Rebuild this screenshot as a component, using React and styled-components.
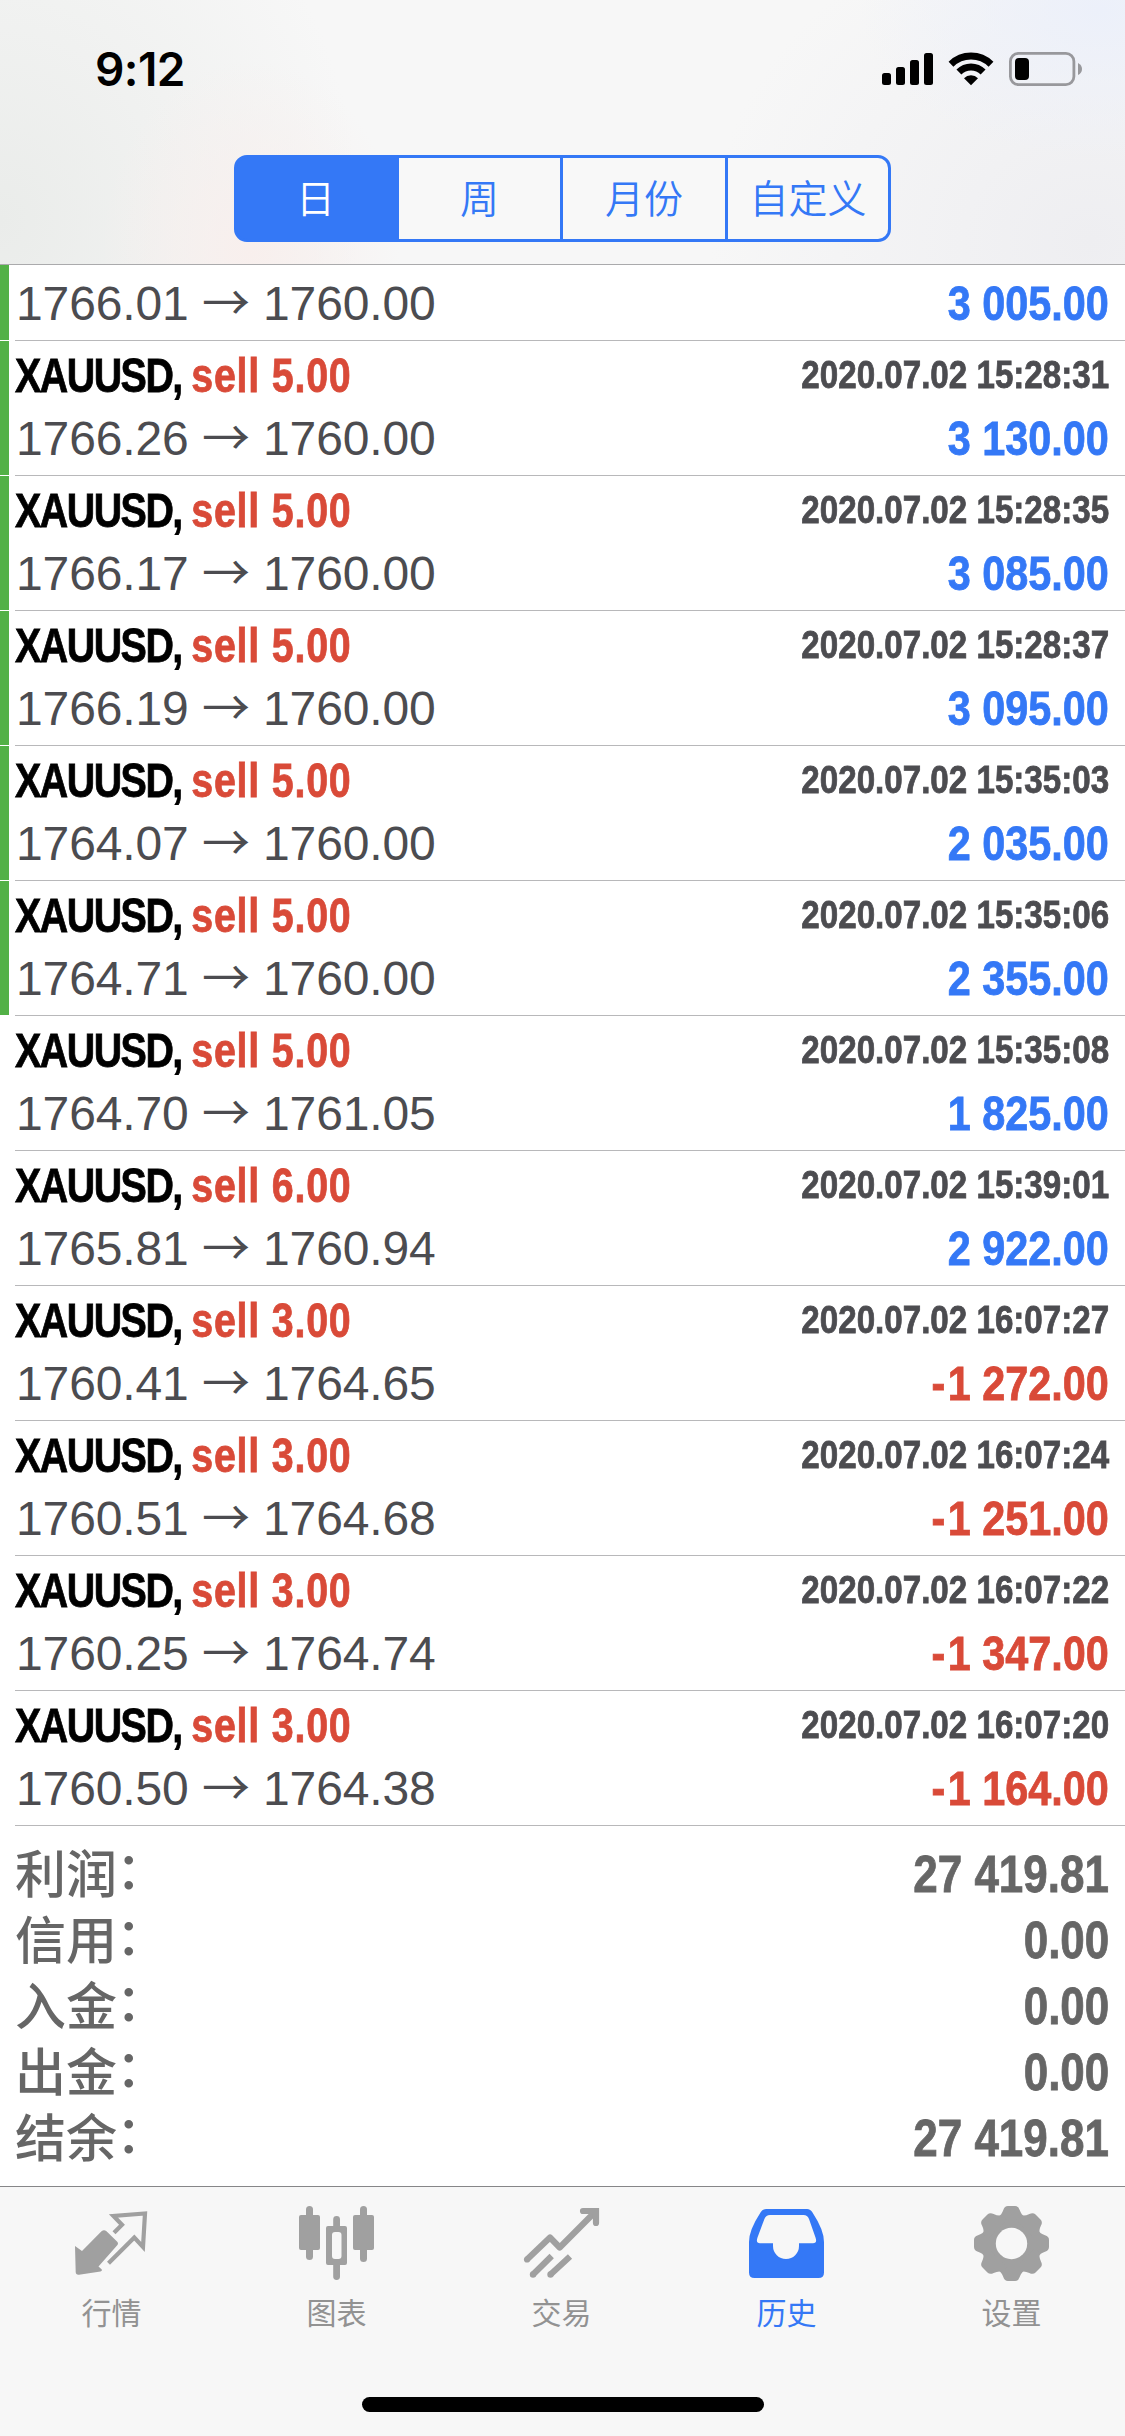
import React from "react";
import styled, { createGlobalStyle } from "styled-components";

const CJK = `"Noto Sans CJK SC", sans-serif`;
const SANS = `"Liberation Sans", ${CJK}`;
const BLUE = "#3478f6";
const RED = "#d94a38";

const GlobalStyle = createGlobalStyle`
  * { box-sizing: border-box; }
  body { margin: 0; background: #fff; }
`;

const Screen = styled.div`
  width: 1125px;
  height: 2436px;
  display: flex;
  flex-direction: column;
  background: #fff;
  overflow: hidden;
  font-family: ${SANS};
`;

const Header = styled.header`
  flex: none;
  height: 265px;
  border-bottom: 1px solid #aaaaac;
  background:
    radial-gradient(ellipse 240px 150px at 1100px 10px, #ecf0fa 0%, #ecf0fa00 100%),
    radial-gradient(ellipse 150px 190px at 250px 250px, #f8efed 0%, #f8efed00 100%),
    radial-gradient(ellipse 360px 420px at 0px 220px, #eaecea 0%, #eaecea00 100%),
    radial-gradient(ellipse 380px 330px at 1090px 240px, #eeeef1 0%, #eeeef100 100%),
    #f7f7f7;
`;

const StatusBar = styled.div`
  height: 155px;
  padding: 0 43px 17px 95px;
  display: flex;
  align-items: center;
  justify-content: space-between;
`;

const Time = styled.span`
  font: 600 46px/60px Inter, sans-serif;
  letter-spacing: -0.6px;
  color: #000;
`;

const StatusIcons = styled.svg`
  display: block;
`;

const Segments = styled.div`
  width: 657px;
  height: 87px;
  margin-left: 234px;
  display: grid;
  grid-template-columns: 162px 164px 165px 1fr;
  border: 3px solid ${BLUE};
  border-radius: 13px;
  overflow: hidden;
  background: ${BLUE};
`;

const Segment = styled.button`
  border: 0;
  border-right: ${(p) => (p.$last ? "0" : `3px solid ${BLUE}`)};
  padding: ${(p) => (p.$active ? "0 2px 6px 0" : "0 0 6px")};
  background: ${(p) => (p.$active ? BLUE : "#f8f8f8")};
  color: ${(p) => (p.$active ? "#fff" : BLUE)};
  font: 350 39px/60px ${CJK};
`;

const List = styled.main`
  flex: none;
  display: flex;
  flex-direction: column;
`;

const Deal = styled.article`
  height: ${(p) => (p.$cut ? 76 : 135)}px;
  display: flex;
`;

const Marker = styled.div`
  width: 9px;
  margin: 0 6px 1px 0;
  background: ${(p) => (p.$on ? "#53b147" : "transparent")};
`;

const DealBody = styled.div`
  flex: 1;
  display: flex;
  flex-direction: column;
  justify-content: flex-end;
  padding: 0 16px 5px 0;
  border-bottom: 1px solid #b8b8ba;
`;

const Line = styled.div`
  height: 63px;
  display: flex;
  justify-content: space-between;
  line-height: 63px;
  white-space: pre;
`;

const Condensed = styled.span`
  display: inline-block;
  font-weight: 700;
  -webkit-text-stroke: 0.8px currentColor;
  transform: scaleX(${(p) => p.$scale});
  transform-origin: ${(p) => p.$origin || "right"} center;
`;

const Symbol = styled(Condensed)`
  font-size: 48px;
  letter-spacing: -1.8px;
  color: #000;
`;

const Side = styled.span`
  letter-spacing: 0.95px;
  color: ${RED};
`;

const Stamp = styled(Condensed)`
  font-size: 39px;
  line-height: 61px;
  color: #4c4c50;
`;

const Price = styled.span`
  padding-left: 1px;
  font-size: 48px;
  letter-spacing: -0.12px;
  color: #4c4c50;
`;

const Arrow = styled.span`
  font-family: ${CJK};
  line-height: 1;
`;

const Result = styled(Condensed)`
  font-size: 48px;
  color: ${(p) => (p.$loss ? RED : BLUE)};

  &::first-letter {
    letter-spacing: ${(p) => (p.$loss ? "3px" : "0")};
  }
`;

const Summary = styled.section`
  flex: 1;
  padding: 15px 16px 0 15px;
`;

const SummaryRow = styled.div`
  height: 66px;
  display: flex;
  justify-content: space-between;
  color: #666;
`;

const SummaryLabel = styled.span`
  font: 500 51px/61px ${CJK};
`;

const Colon = styled.span`
  display: inline-block;
  transform: translate(-1px, -4px);
`;

const SummaryValue = styled(Condensed)`
  font-size: 51px;
  line-height: 67px;
`;

const TabBar = styled.nav`
  flex: none;
  height: 250px;
  background: #f7f7f7;
  border-top: 1px solid #868688;
  display: flex;
  flex-direction: column;
  justify-content: space-between;
  align-items: center;
  padding-bottom: 24px;
`;

const Tabs = styled.div`
  width: 100%;
  display: grid;
  grid-template-columns: repeat(5, 225px);
  margin-left: -2px;
  padding-top: 19px;
`;

const Tab = styled.div`
  display: flex;
  flex-direction: column;
  align-items: center;
  gap: 10px;
  color: ${(p) => (p.$active ? BLUE : "#a0a0a0")};
`;

const TabLabel = styled.span`
  font: 400 30px/40px ${CJK};
  color: ${(p) => (p.$active ? BLUE : "#929292")};
`;

const Glyph = styled.svg`
  width: 75px;
  height: 75px;
  display: block;
  overflow: visible;
`;

const HomeIndicator = styled.div`
  width: 402px;
  height: 15px;
  border-radius: 8px;
  background: #000;
`;

const QuotesIcon = () => (
  <Glyph viewBox="0 0 75 75" fill="none">
    <path d="M40 26.7 48 18.7 39.5 10 71 7.5 69 41 60.3 31.5 34.5 57.3" stroke="currentColor" strokeWidth="4.2" />
    <path d="M1 40 8 45 27.5 25.3Q30 23 32.5 25.3L43 35.5Q45 37.500 43 39.500L24.500 60.500 27.800 63.500Q28.500 65 26.500 65.400L5 68.700Q1.800 69 1.700 66Z" fill="currentColor" />
  </Glyph>
);

const ChartIcon = () => (
  <Glyph viewBox="0 0 75 75" fill="currentColor">
    <rect x="0" y="9" width="21" height="35" rx="2" />
    <rect x="7" y="0" width="7" height="54" rx="3.5" />
    <rect x="54" y="9" width="21" height="35" rx="2" />
    <rect x="61" y="0" width="7" height="56" rx="3.5" />
    <path d="M34.2 22V13.5a3.4 3.4 0 0 1 6.8 0V22ZM34.2 57V70.5a3.4 3.4 0 0 0 6.8 0V57Z" />
    <path fillRule="evenodd" d="M29 20H46Q48 20 48 22V57Q48 59 46 59H29Q27 59 27 57V22Q27 20 29 20ZM36 26Q33 26 33 29V50Q33 53 36 53H39.5Q42.5 53 42.5 50V29Q42.5 26 39.5 26Z" />
  </Glyph>
);

const TradeIcon = () => (
  <Glyph viewBox="0 0 75 75" fill="none" stroke="currentColor" strokeWidth="6.200">
    <path d="M3 53.5 26 31.5 35.7 41.5 71 6" strokeLinejoin="round" />
    <path d="M59 5H72V17" strokeLinecap="round" />
    <path d="M9 68.5 27.7 50M26.5 68.5 46 50.5" />
    <g fill="currentColor" stroke="none">
      <circle cx="3" cy="53.5" r="3.100" />
      <circle cx="9" cy="68.5" r="3.2" />
      <circle cx="26.5" cy="68.5" r="3.2" />
    </g>
  </Glyph>
);

const HistoryIcon = () => (
  <Glyph viewBox="0 0 75 75" fill="currentColor">
    <path fillRule="evenodd" d="M17 3H58Q61.5 3 63.5 6.5 75 24 75 36V66.500Q75 72 69.500 72H5.500Q0 72 0 66.500V36Q0 24 11.500 6.500 13.500 3 17 3ZM21 9Q17 9 15.400 13L8.500 31.500Q6.500 37.300 11 37.300H24V40A13 13 0 0 0 50 40V37.300H64Q68.500 37.300 66.500 31.500L60 13Q58.500 9 54.500 9Z" />
  </Glyph>
);

const SettingsIcon = () => (
  <Glyph viewBox="-37.5 -37.5 75 75" fill="currentColor">
    <defs>
      <mask id="gear-hole">
        <rect x="-38" y="-38" width="76" height="76" fill="#fff" />
        <circle r="15.7" fill="#000" />
      </mask>
    </defs>
    <g mask="url(#gear-hole)">
      <circle r="29.6" />
      {[0, 45, 90, 135, 180, 225, 270, 315].map((a) => (
        <path
          key={a}
          transform={`rotate(${a})`}
          d="M-13-27Q-10-28.500-8.200-33.500-7-37.500-3.500-37.500H3.500Q7-37.500 8.200-33.500 10-28.500 13-27V-20H-13Z"
        />
      ))}
    </g>
  </Glyph>
);

const deals = [
  ["", "", "1766.01", "1760.00", "3 005.00", true],
  ["5.00", "2020.07.02 15:28:31", "1766.26", "1760.00", "3 130.00", true],
  ["5.00", "2020.07.02 15:28:35", "1766.17", "1760.00", "3 085.00", true],
  ["5.00", "2020.07.02 15:28:37", "1766.19", "1760.00", "3 095.00", true],
  ["5.00", "2020.07.02 15:35:03", "1764.07", "1760.00", "2 035.00", true],
  ["5.00", "2020.07.02 15:35:06", "1764.71", "1760.00", "2 355.00", true],
  ["5.00", "2020.07.02 15:35:08", "1764.70", "1761.05", "1 825.00", false],
  ["6.00", "2020.07.02 15:39:01", "1765.81", "1760.94", "2 922.00", false],
  ["3.00", "2020.07.02 16:07:27", "1760.41", "1764.65", "-1 272.00", false],
  ["3.00", "2020.07.02 16:07:24", "1760.51", "1764.68", "-1 251.00", false],
  ["3.00", "2020.07.02 16:07:22", "1760.25", "1764.74", "-1 347.00", false],
  ["3.00", "2020.07.02 16:07:20", "1760.50", "1764.38", "-1 164.00", false],
];

const totals = [
  ["利润", "27 419.81"],
  ["信用", "0.00"],
  ["入金", "0.00"],
  ["出金", "0.00"],
  ["结余", "27 419.81"],
];

const tabs = [
  ["行情", QuotesIcon],
  ["图表", ChartIcon],
  ["交易", TradeIcon],
  ["历史", HistoryIcon],
  ["设置", SettingsIcon],
];

const periods = ["日", "周", "月份", "自定义"];

export default function App() {
  return (
    <Screen>
      <GlobalStyle />
      <Header>
        <StatusBar>
          <Time>9:12</Time>
          <StatusIcons width="201" height="36" viewBox="881 51 201 36">
            <rect x="882" y="73" width="9" height="12" rx="2.500" />
            <rect x="896" y="67" width="9" height="18" rx="2.500" />
            <rect x="910" y="60" width="9" height="25" rx="2.500" />
            <rect x="924" y="53" width="9" height="32" rx="2.500" />
            <g fill="none" stroke="#000" strokeWidth="6.900">
              <path d="M951 64.200A28.500 28.500 0 0 1 991 64.200" />
              <path d="M958.900 72A17 17 0 0 1 983.100 72" />
            </g>
            <path d="M971 85.200 964 78.200A10 10 0 0 1 978 78.200Z" />
            <rect x="1010.400" y="53.400" width="63.500" height="31.200" rx="8" fill="none" stroke="#98989c" strokeWidth="2.800" />
            <rect x="1015" y="58" width="14" height="22" rx="4" />
            <path d="M1078 63Q1082 65 1082 69 1082 73 1078 75Z" fill="#98989c" />
          </StatusIcons>
        </StatusBar>
        <Segments>
          {periods.map((name, i) => (
            <Segment key={name} $active={i === 0} $last={i === 3}>
              {name}
            </Segment>
          ))}
        </Segments>
      </Header>

      <List>
        {deals.map(([volume, time, open, close, result, marked]) => (
          <Deal key={time} $cut={!time}>
            <Marker $on={marked} />
            <DealBody>
              {time && (
                <Line>
                  <Symbol $scale={0.82} $origin="left">
                    XAUUSD, <Side>sell {volume}</Side>
                  </Symbol>
                  <Stamp $scale={0.85}>{time}</Stamp>
                </Line>
              )}
              <Line>
                <Price>
                  {open} <Arrow>→</Arrow> {close}
                </Price>
                <Result $scale={0.862} $loss={result.startsWith("-")}>
                  {result}
                </Result>
              </Line>
            </DealBody>
          </Deal>
        ))}
      </List>

      <Summary>
        {totals.map(([label, value]) => (
          <SummaryRow key={label}>
            <SummaryLabel>
              {label}
              <Colon>：</Colon>
            </SummaryLabel>
            <SummaryValue $scale={0.862}>{value}</SummaryValue>
          </SummaryRow>
        ))}
      </Summary>

      <TabBar>
        <Tabs>
          {tabs.map(([name, Icon], i) => (
            <Tab key={name} $active={i === 3}>
              <Icon />
              <TabLabel $active={i === 3}>{name}</TabLabel>
            </Tab>
          ))}
        </Tabs>
        <HomeIndicator />
      </TabBar>
    </Screen>
  );
}
